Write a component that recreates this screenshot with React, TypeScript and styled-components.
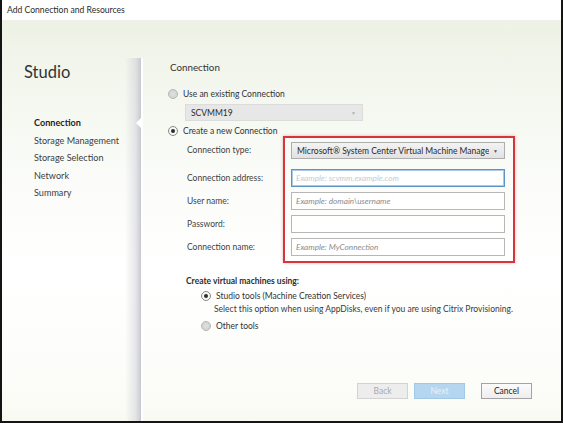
import styled, { createGlobalStyle } from "styled-components";

const GlobalStyle = createGlobalStyle`
  html, body {
    margin: 0;
    padding: 0;
    background: #ffffff;
  }
  * {
    box-sizing: border-box;
  }
`;

const font = `"Segoe UI", Lato, "Liberation Sans", sans-serif`;

const Frame = styled.div`
  width: 563px;
  height: 423px;
  display: flex;
  flex-direction: column;
  border: 2px solid #141414;
  border-top: none;
  font-family: ${font};
  color: #3a3a3a;
  overflow: hidden;
`;

const TitleBar = styled.div`
  height: 21px;
  line-height: 21px;
  padding-left: 5px;
  font-size: 8.6px;
  color: #2b2b2b;
  background: #ffffff;
  border-bottom: 1px solid #eef1ea;
`;

const Body = styled.div`
  flex: 1;
  display: flex;
  background: linear-gradient(
    to bottom,
    #edf2e5 0%,
    #f4f7ef 18%,
    #fbfcf9 40%,
    #ffffff 62%,
    #fcfdf9 90%,
    #f8faf2 100%
  );
`;

const Sidebar = styled.aside`
  position: relative;
  width: 141px;
  flex-shrink: 0;
  padding-left: 22px;
  &::after {
    content: "";
    position: absolute;
    top: 37px;
    bottom: 0;
    right: 0;
    width: 18px;
    background: linear-gradient(
      to right,
      rgba(210, 210, 218, 0) 0%,
      rgba(205, 205, 214, 0.5) 60%,
      #c9c9d2 88%,
      #ffffff 90%,
      #ffffff 100%
    );
  }
`;

const Notch = styled.div`
  position: absolute;
  right: 2px;
  top: 97px;
  width: 0;
  height: 0;
  border-top: 5px solid transparent;
  border-bottom: 5px solid transparent;
  border-right: 5px solid #ffffff;
  z-index: 1;
`;

const Brand = styled.div`
  margin-top: 41px;
  font-size: 16.5px;
  line-height: 20px;
  color: #333333;
`;

const Nav = styled.ul`
  list-style: none;
  margin: 32px 0 0;
  padding: 0 0 0 10px;
`;

const NavItem = styled.li<{ $active?: boolean }>`
  font-size: 9.1px;
  line-height: 17.5px;
  white-space: nowrap;
  color: ${(p) => (p.$active ? "#1f1f1f" : "#3d3d3d")};
  font-weight: ${(p) => (p.$active ? 700 : 400)};
`;

const Main = styled.main`
  flex: 1;
  display: flex;
  flex-direction: column;
  padding: 39px 0 0 25px;
`;

const Heading = styled.div`
  margin-left: 2px;
  font-size: 9.8px;
  line-height: 14px;
  color: #333333;
`;

const RadioRow = styled.label<{ $top: number; $indent?: number }>`
  display: flex;
  align-items: center;
  gap: 5px;
  height: 14px;
  margin-top: ${(p) => p.$top}px;
  margin-left: ${(p) => p.$indent ?? 0}px;
  font-size: 8.5px;
  color: #333333;
  white-space: nowrap;
`;

const Radio = styled.span<{ $checked?: boolean }>`
  position: relative;
  width: 10px;
  height: 10px;
  border-radius: 50%;
  border: 1px solid ${(p) => (p.$checked ? "#8a8a8a" : "#b4b4b4")};
  background: ${(p) =>
    p.$checked
      ? "radial-gradient(circle, #ffffff 0%, #f0f0f0 100%)"
      : "radial-gradient(circle, #e2e2e2 0%, #d4d4d4 60%, #e8e8e8 100%)"};
  flex-shrink: 0;
  &::after {
    content: "";
    display: ${(p) => (p.$checked ? "block" : "none")};
    position: absolute;
    left: 2px;
    top: 2px;
    width: 4px;
    height: 4px;
    border-radius: 50%;
    background: #2d2d2d;
  }
`;

const DropDown = styled.div<{ $disabled?: boolean; $width: number }>`
  display: flex;
  align-items: center;
  justify-content: space-between;
  width: ${(p) => p.$width}px;
  height: 17px;
  padding: 0 6px 0 5px;
  font-size: 8.5px;
  white-space: nowrap;
  overflow: hidden;
  color: #2a2a2a;
  border: 1px solid ${(p) => (p.$disabled ? "#dcdcdc" : "#adadad")};
  background: ${(p) =>
    p.$disabled ? "#e7e7e7" : "linear-gradient(to bottom, #f3f3f3, #e2e2e2)"};
`;

const DropText = styled.span`
  overflow: hidden;
`;

const Caret = styled.span<{ $disabled?: boolean }>`
  font-size: 5px;
  margin-left: 4px;
  color: ${(p) => (p.$disabled ? "#b0b0b0" : "#555555")};
`;

const DisabledSelect = styled(DropDown)`
  margin-top: 3px;
  margin-left: 17px;
  padding-left: 5px;
`;

const FormGrid = styled.div`
  position: relative;
  display: grid;
  grid-template-columns: 104px 214px;
  grid-template-rows: 22px repeat(4, 18px);
  row-gap: 5px;
  margin-top: 4px;
  margin-left: 19px;
`;

const FieldLabel = styled.div<{ $short?: boolean }>`
  font-size: 8.5px;
  line-height: ${(p) => (p.$short ? 17 : 18)}px;
  color: #3f3f3f;
  white-space: nowrap;
`;

const Input = styled.input<{ $focused?: boolean }>`
  width: 214px;
  height: 18px;
  margin: 0;
  padding: 0 4px;
  font-family: ${font};
  font-size: 8.2px;
  background: #ffffff;
  border: 1px solid ${(p) => (p.$focused ? "#5c94c6" : "#b7b7b7")};
  box-shadow: ${(p) => (p.$focused ? "inset 0 0 0 1px #a9c9e6" : "none")};
  outline: none;
  &::placeholder {
    font-style: italic;
    color: ${(p) => (p.$focused ? "#c4ccd3" : "#8c8c8c")};
  }
`;

const Highlight = styled.div`
  position: absolute;
  left: 96px;
  top: -6px;
  width: 232px;
  height: 127px;
  border: 2px solid #d5363d;
  box-shadow: 0 0 3px rgba(180, 40, 40, 0.35);
  pointer-events: none;
`;

const SectionTitle = styled.div`
  margin-top: 18px;
  margin-left: 18px;
  font-size: 8.5px;
  line-height: 14px;
  font-weight: 700;
  color: #2e2e2e;
`;

const Hint = styled.div`
  margin-left: 46px;
  font-size: 8.5px;
  line-height: 12px;
  color: #3a3a3a;
  white-space: nowrap;
`;

const ButtonBar = styled.div`
  margin-top: auto;
  display: flex;
  justify-content: flex-end;
  padding: 0 29px 22px 0;
`;

const Button = styled.button<{ $kind: "disabled" | "primary" | "normal" }>`
  width: 51px;
  height: 16px;
  padding: 0;
  margin-left: ${(p) => (p.$kind === "normal" ? 16 : 6)}px;
  font-family: ${font};
  font-size: 8.5px;
  color: ${(p) =>
    p.$kind === "disabled" ? "#a9a9a9" : p.$kind === "primary" ? "#e9f2f9" : "#1e1e1e"};
  background: ${(p) =>
    p.$kind === "disabled"
      ? "#ededed"
      : p.$kind === "primary"
      ? "#b5d6ee"
      : "linear-gradient(to bottom, #fbfbfb, #eeeeee)"};
  border: 1px solid
    ${(p) =>
      p.$kind === "disabled" ? "#d3d3d3" : p.$kind === "primary" ? "#a3c8e5" : "#a3a3a3"};
`;

export default function App() {
  return (
    <>
      <GlobalStyle />
      <Frame>
        <TitleBar>Add Connection and Resources</TitleBar>
        <Body>
          <Sidebar>
            <Notch />
            <Brand>Studio</Brand>
            <Nav>
              <NavItem $active>Connection</NavItem>
              <NavItem>Storage Management</NavItem>
              <NavItem>Storage Selection</NavItem>
              <NavItem>Network</NavItem>
              <NavItem>Summary</NavItem>
            </Nav>
          </Sidebar>
          <Main>
            <Heading>Connection</Heading>
            <RadioRow $top={13}>
              <Radio />
              Use an existing Connection
            </RadioRow>
            <DisabledSelect $disabled $width={178}>
              <DropText>SCVMM19</DropText>
              <Caret $disabled>▼</Caret>
            </DisabledSelect>
            <RadioRow $top={3}>
              <Radio $checked />
              Create a new Connection
            </RadioRow>
            <FormGrid>
              <FieldLabel $short>Connection type:</FieldLabel>
              <DropDown $width={214}>
                <DropText>Microsoft® System Center Virtual Machine Manage</DropText>
                <Caret>▼</Caret>
              </DropDown>
              <FieldLabel>Connection address:</FieldLabel>
              <Input $focused placeholder="Example: scvmm.example.com" />
              <FieldLabel>User name:</FieldLabel>
              <Input placeholder="Example: domain\username" />
              <FieldLabel>Password:</FieldLabel>
              <Input type="password" />
              <FieldLabel>Connection name:</FieldLabel>
              <Input placeholder="Example: MyConnection" />
              <Highlight />
            </FormGrid>
            <SectionTitle>Create virtual machines using:</SectionTitle>
            <RadioRow $top={1} $indent={33}>
              <Radio $checked />
              Studio tools (Machine Creation Services)
            </RadioRow>
            <Hint>
              Select this option when using AppDisks, even if you are using Citrix Provisioning.
            </Hint>
            <RadioRow $top={4} $indent={33}>
              <Radio />
              Other tools
            </RadioRow>
            <ButtonBar>
              <Button $kind="disabled">Back</Button>
              <Button $kind="primary">Next</Button>
              <Button $kind="normal">Cancel</Button>
            </ButtonBar>
          </Main>
        </Body>
      </Frame>
    </>
  );
}
